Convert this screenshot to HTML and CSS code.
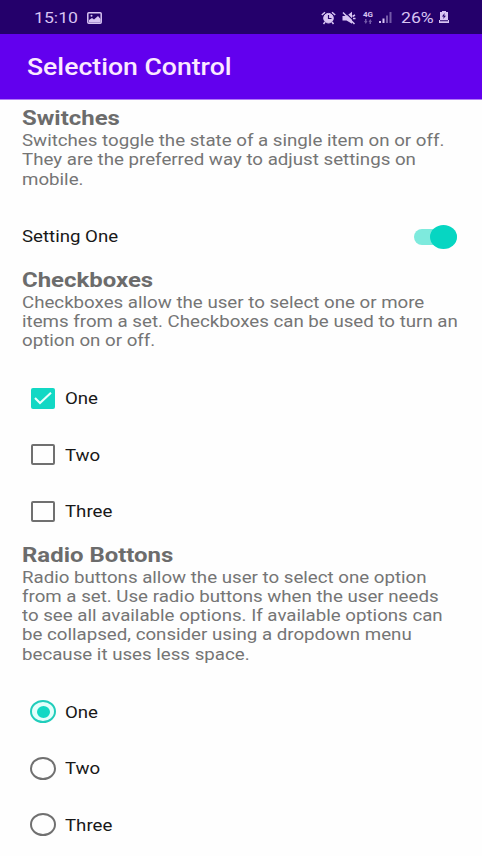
FILE: index.html
```html
<!DOCTYPE html>
<html lang="en">
<head>
<meta charset="utf-8">
<title>Selection Control</title>
<link rel="stylesheet" href="styles.css">
</head>
<body>
<header>
  <div class="status">
    <span class="time">15:10</span>
    <svg class="picture" width="15" height="12" viewBox="0 0 15 12"><rect x=".8" y=".8" width="13.4" height="10.4" rx="1" fill="none" stroke="#d8c4f3" stroke-width="1.5"/><path d="M2 9.5V8l3-2 2 1.5L11 4l2.500 3v3.500H2z" fill="#d8c4f3"/><circle cx="4.500" cy="3.800" r="1" fill="#d8c4f3"/></svg>
    <div class="indicators">
      <svg width="15" height="14" viewBox="0 0 15 14" fill="none" stroke="#d8c4f3"><circle cx="7.500" cy="7.200" r="4.800" fill="#d8c4f3"/><path d="M.8 4L4 1.200M14.200 4L11 1.200M4 11l-1.500 2M11 11l1.500 2" stroke-width="1.500"/><path d="M7.500 4v3.500H10.500" stroke="#24006b" stroke-width="1.200"/></svg>
      <svg class="mute" width="14" height="14" viewBox="0 0 14 14"><path d="M.5 5h4L10 .8v12L4.500 9.500h-4z" fill="#d8c4f3"/><path d="M2.800 .8l10.500 10.500" stroke="#24006b" stroke-width="1.200"/><path d="M1 1.500l11.500 11.500M10.500 5.500L13 4M11 7.500h2.500" stroke="#d8c4f3" stroke-width="1.500"/></svg>
      <div class="network"><span class="gen">4G</span><svg width="10" height="5" viewBox="0 0 10 5" fill="#7358a8"><path d="M1 2h1V0h1.500v2h1L2.800 5zM5.500 3h1v2H8V3h1L7.300 0z"/></svg></div>
      <svg class="signal" width="13" height="13" viewBox="0 0 13 13"><path d="M0 10h2v2H0zM3.500 7.500h2V12h-2z" fill="#d8c4f3"/><path d="M7 4.500h2V12H7zM10.500 1h2v11h-2z" fill="#7358a8"/></svg>
      <span class="percent">26%</span>
      <svg class="battery" width="10" height="13" viewBox="0 0 10 13"><path d="M3 0h4v1h2v8h1v3H0V9h1V1h2z" fill="#d8c4f3"/><path d="M5.600 2L3 5.500h1.700L4.200 8 7 4.700H5.300zM1 9.300h8v.9H1z" fill="#24006b"/></svg>
    </div>
  </div>
  <div class="appbar"><h1>Selection Control</h1></div>
</header>
<main>
  <section>
    <h2>Switches</h2>
    <p>Switches toggle the state of a single item on or off.<br>They are the preferred way to adjust settings on<br>mobile.</p>
    <div class="row setting"><span class="label">Setting One</span><span class="switch"><span class="thumb"></span></span></div>
  </section>
  <section>
    <h2>Checkboxes</h2>
    <p>Checkboxes allow the user to select one or more<br>items from a set. Checkboxes can be used to turn an<br>option on or off.</p>
    <div class="row"><span class="box checked"><svg width="24" height="22" viewBox="0 0 24 22"><path d="M4 11l5 5L20 5.800" fill="none" stroke="#e9fffb" stroke-width="2.100"/></svg></span><span class="label">One</span></div>
    <div class="row"><span class="box"></span><span class="label">Two</span></div>
    <div class="row"><span class="box"></span><span class="label">Three</span></div>
  </section>
  <section>
    <h2>Radio Bottons</h2>
    <p>Radio buttons allow the user to select one option<br>from a set. Use radio buttons when the user needs<br>to see all available options. If available options can<br>be collapsed, consider using a dropdown menu<br>because it uses less space.</p>
    <div class="row"><span class="radio on"><span class="dot"></span></span><span class="label">One</span></div>
    <div class="row"><span class="radio"></span><span class="label">Two</span></div>
    <div class="row"><span class="radio"></span><span class="label">Three</span></div>
  </section>
</main>
</body>
</html>
```
FILE: styles.css
```css
* { box-sizing: border-box; }
body { margin: 0; height: 856px; overflow: hidden; background: #fefefe; font-family: Roboto, sans-serif; }
h1, h2, p { width: max-content; margin: 0; white-space: nowrap; }
svg { display: block; flex: none; }

.status { display: flex; align-items: center; height: 34px; padding: 1px 33px 0 34px; background: #24006b; color: #d8c4f3; }
.time, .percent { font-size: 15.500px; line-height: 18px; transform: scaleX(1.140); transform-origin: left; }
.time { width: 53px; }
.percent { width: 37px; margin-left: 9px; }
.indicators { display: flex; align-items: center; margin-left: auto; }
.mute { margin-left: 6px; }
.network { display: flex; flex-direction: column; align-items: center; width: 12px; margin-left: 6px; }
.gen { font-size: 8px; font-weight: 700; line-height: 8px; }
.signal { margin-left: 5px; }
.battery { margin-left: 1px; }

.appbar { display: flex; align-items: center; height: 66px; padding: 3px 27px 0; background: #6200ee; border-bottom: 1px solid #b27af5; }
h1 { color: #fbe9ff; font-size: 23px; font-weight: 500; line-height: 28px; transform: scaleX(1.157); transform-origin: left; }

main { padding: 6px 25px 0 22px; }
section { padding-bottom: 3px; }
h2 { height: 24px; color: #6c6c6c; font-size: 21px; font-weight: 700; line-height: 24px; transform: scaleX(1.140); transform-origin: left; }
p { padding-top: 1px; margin-bottom: 19.500px; color: #757575; font-size: 16px; line-height: 19.250px; transform: scaleX(1.168); transform-origin: left; }
.row { display: flex; align-items: center; height: 56.500px; padding-left: 8px; }
.setting { justify-content: space-between; padding-left: 0; }
.label { padding-top: 2px; color: #181818; font-size: 16px; line-height: 20px; transform: scaleX(1.165); transform-origin: left; }
.setting .label { padding-top: 1px; }

.switch { display: flex; align-items: center; justify-content: flex-end; width: 43px; height: 16px; border-radius: 9px; background: #7eeadd; }
.thumb { width: 27px; height: 24px; flex: none; border-radius: 50%; background: #06d6c2; }
.box { width: 24px; height: 21px; margin: 0 10px 0 1px; border: 2px solid #707070; border-radius: 2px; }
.checked { display: flex; align-items: center; justify-content: center; border: 0; background: #12d8c4; }
.radio { display: flex; align-items: center; justify-content: center; width: 26px; height: 23px; margin-right: 9px; border: 2px solid #707070; border-radius: 50%; }
.on { border-color: #20cdbb; background: #e3fffb; }
.dot { width: 13px; height: 12px; border-radius: 50%; background: #12d8c4; }
```
